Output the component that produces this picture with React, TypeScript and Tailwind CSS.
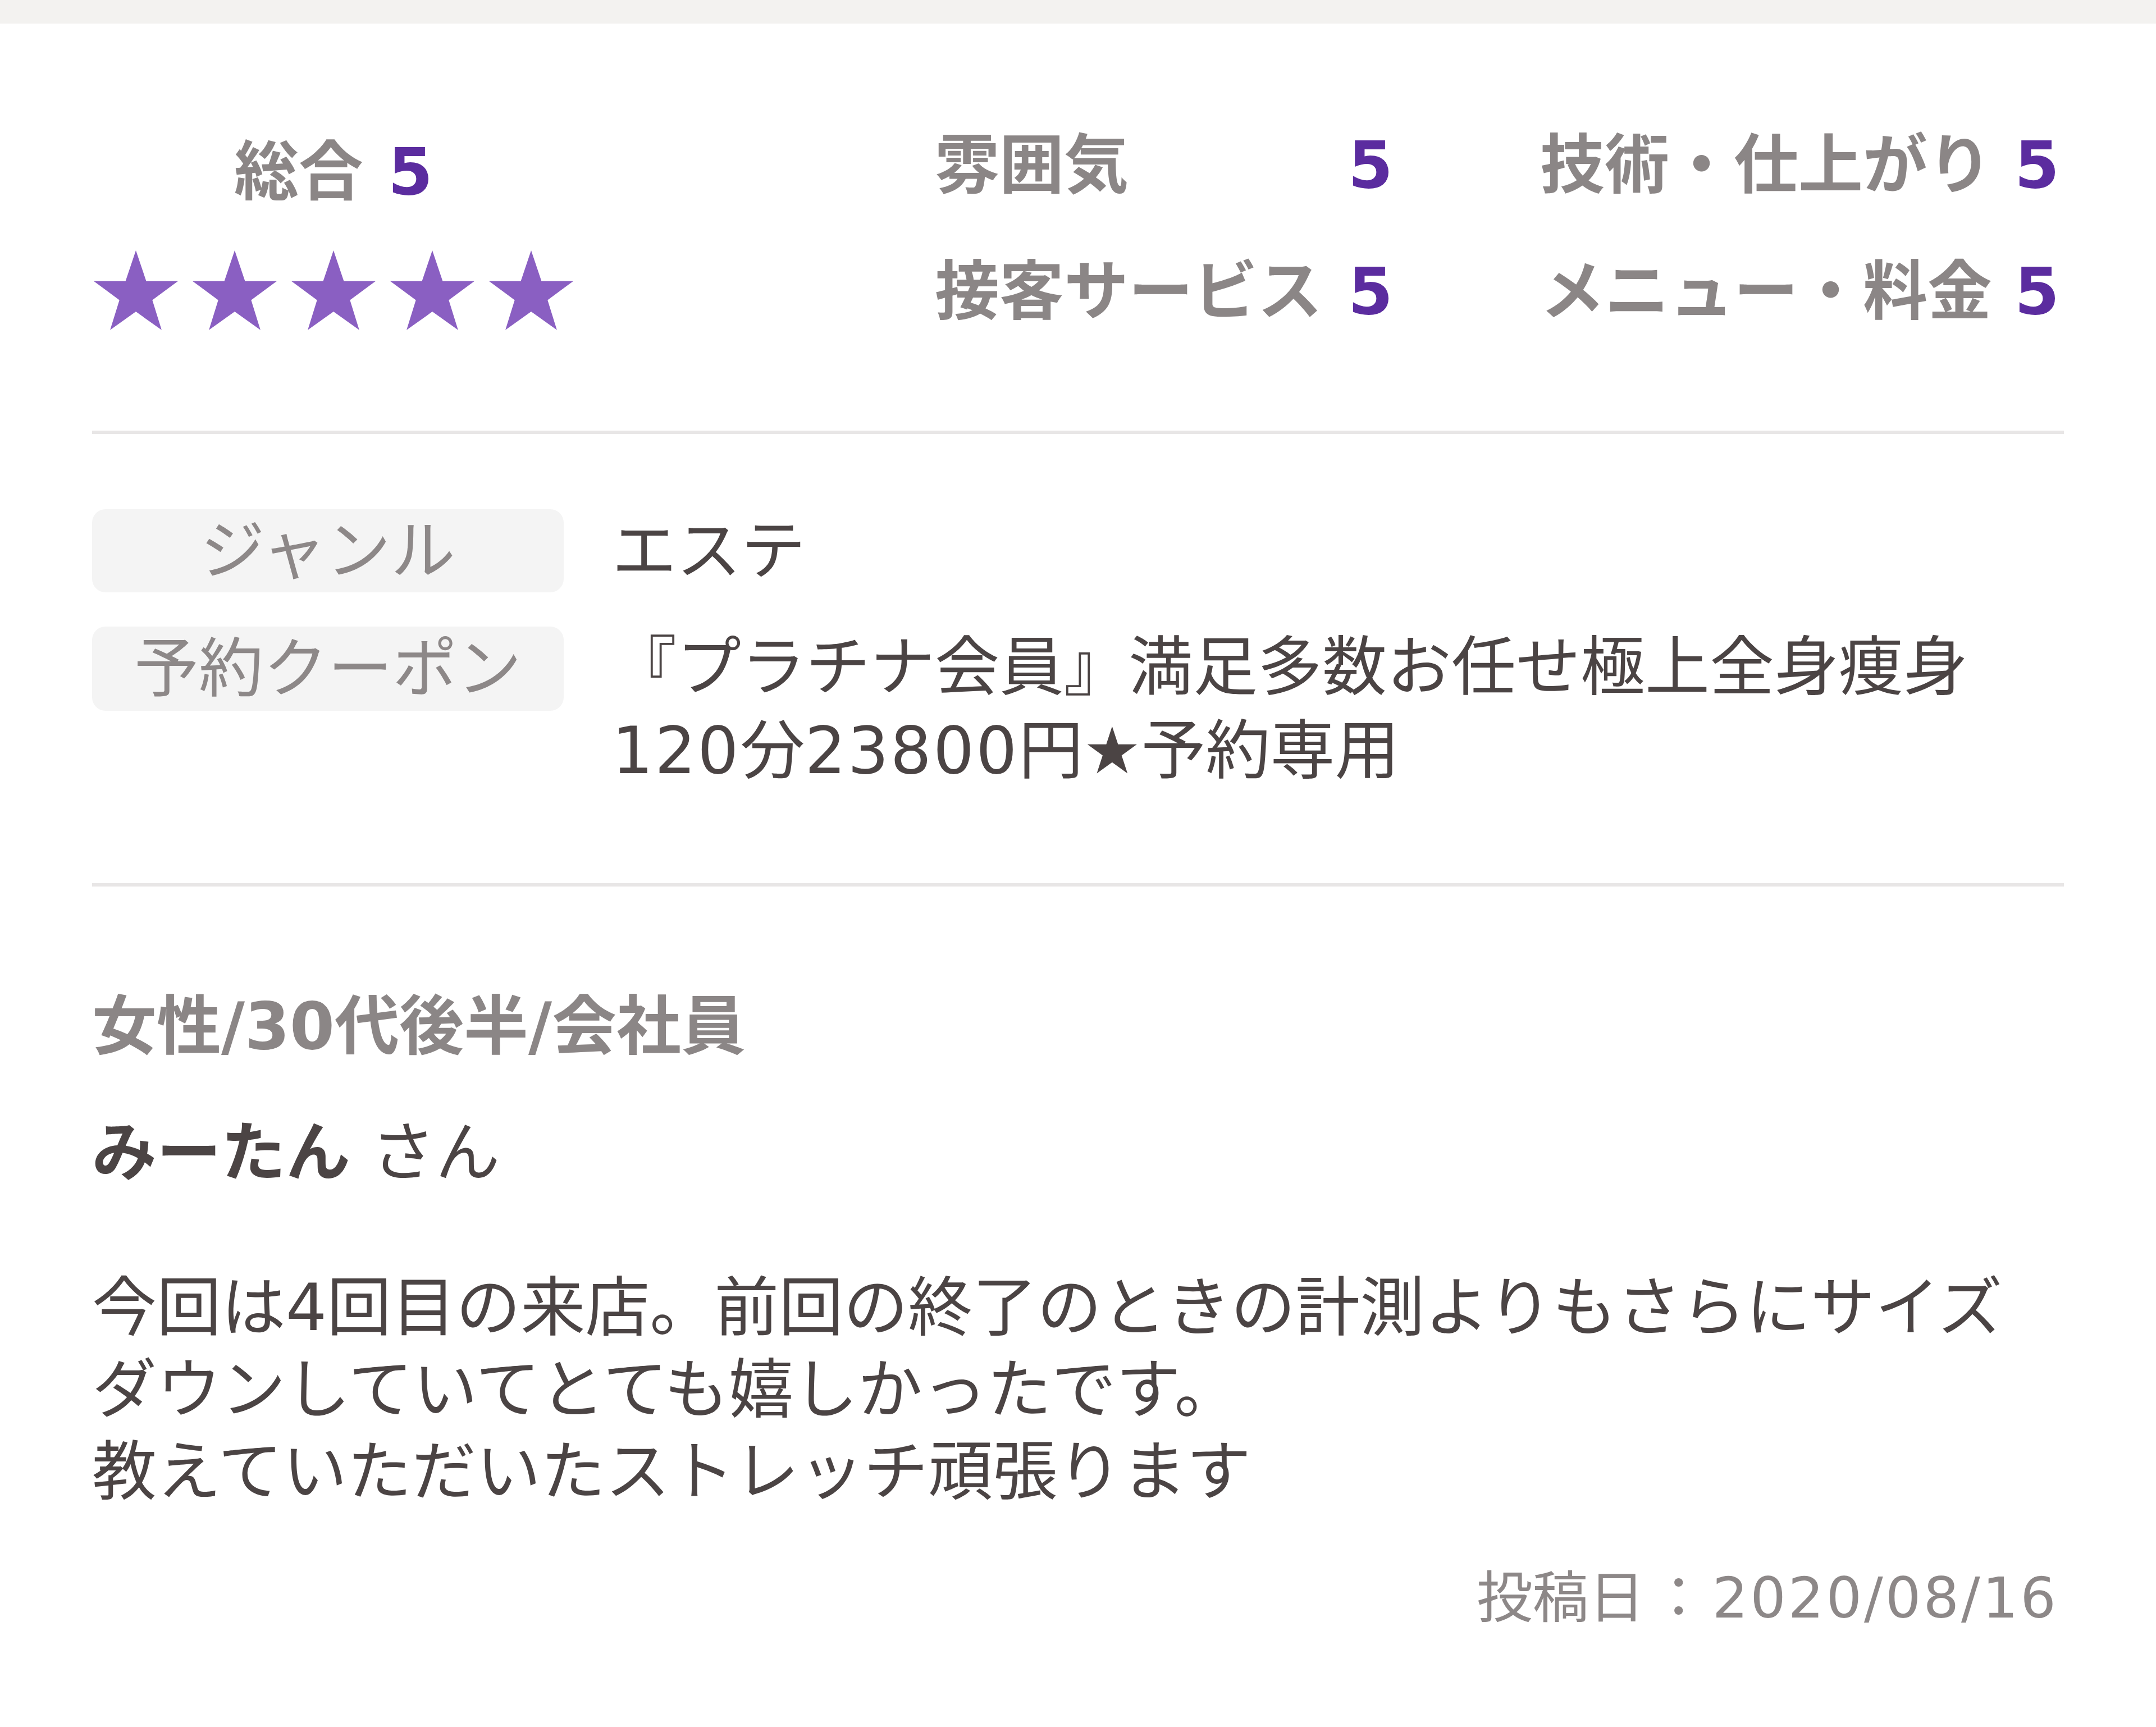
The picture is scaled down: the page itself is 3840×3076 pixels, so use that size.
import React from "react";

const Star = () => (
	<svg viewBox="0 0 100 95" className="w-[160px] h-[152px]">
		<polygon
			points="50,0 61.8,35.1 98.1,35.1 68.8,56.8 79.4,91 50,70 20.6,91 31.2,56.8 1.9,35.1 38.2,35.1"
			fill="#8a5fc2"
		/>
	</svg>
);

const Score = ({ label }: { label: string }) => (
	<div className="h-[225px] flex items-center justify-between">
		<span className="font-bold text-[#8b8686]">{label}</span>
		<span className="font-bold text-[#5b2c9f]">5</span>
	</div>
);

export default function App() {
	return (
		<div className="w-[3840px] h-[3076px] bg-white font-['DejaVu_Sans','Noto_Sans_CJK_JP',sans-serif] text-[115px]">
			<div className="h-[42px] bg-[#f3f2f0]" />

			<div className="px-[164px]">
				{/* 評価 */}
				<div className="flex pt-[140px] pb-[135px] border-b-[6px] border-[#e8e6e6]">
					<div className="w-[860px] flex flex-col">
						<div className="h-[225px] pt-[24px] flex items-center justify-center gap-[44px] font-bold">
							<span className="text-[#8b8686]">総合</span>
							<span className="text-[#5b2c9f]">5</span>
						</div>
						<div className="h-[225px] flex items-center gap-[20px]">
							<Star />
							<Star />
							<Star />
							<Star />
							<Star />
						</div>
					</div>
					<div className="ml-auto mr-[8px] grid grid-cols-[816px_925px] gap-x-[262px]">
						<Score label="雰囲気" />
						<Score label="技術・仕上がり" />
						<Score label="接客サービス" />
						<Score label="メニュー・料金" />
					</div>
				</div>

				{/* ジャンル・クーポン */}
				<div className="pt-[134px] pb-[161px] flex flex-col gap-[60px] border-b-[6px] border-[#e8e6e6]">
					<div className="flex items-start gap-[86px]">
						<div className="w-[840px] h-[148px] shrink-0 rounded-[24px] bg-[#f4f4f4] flex items-center justify-center text-[#8d8888]">
							ジャンル
						</div>
						<div className="leading-[149px] text-[#4b4444]">エステ</div>
					</div>
					<div className="flex items-start gap-[86px]">
						<div className="w-[840px] h-[150px] shrink-0 rounded-[24px] bg-[#f4f4f4] flex items-center justify-center text-[#8d8888]">
							予約クーポン
						</div>
						<div className="leading-[149px] text-[#4b4444] -mt-[2px]">
							『プラチナ会員』満足多数お任せ極上全身痩身
							<br />
							<span className="tracking-[3px]">120</span>分
							<span className="tracking-[3px]">23800</span>
							円★予約専用
						</div>
					</div>
				</div>

				{/* 口コミ */}
				<div className="pt-[175px] pb-[157px]">
					<div className="leading-[149px] font-bold text-[#8b8686]">
						女性/30代後半/会社員
					</div>
					<div className="mt-[76px] leading-[149px] text-[#4b4444]">
						<span className="font-bold">みーたん</span> さん
					</div>
					<p className="mt-[128px] leading-[146px] text-[#4b4444]">
						今回は4回目の来店。前回の終了のときの計測よりもさらにサイズ
						<br />
						ダウンしていてとても嬉しかったです。
						<br />
						教えていただいたストレッチ頑張ります
					</p>
					<div className="mt-[80px] pr-[10px] text-right text-[100px] leading-[146px] text-[#8d8888]">
						投稿日<span className="mx-[10px]">：</span>
						<span className="tracking-[4px]">2020/08/16</span>
					</div>
				</div>
			</div>
		</div>
	);
}
